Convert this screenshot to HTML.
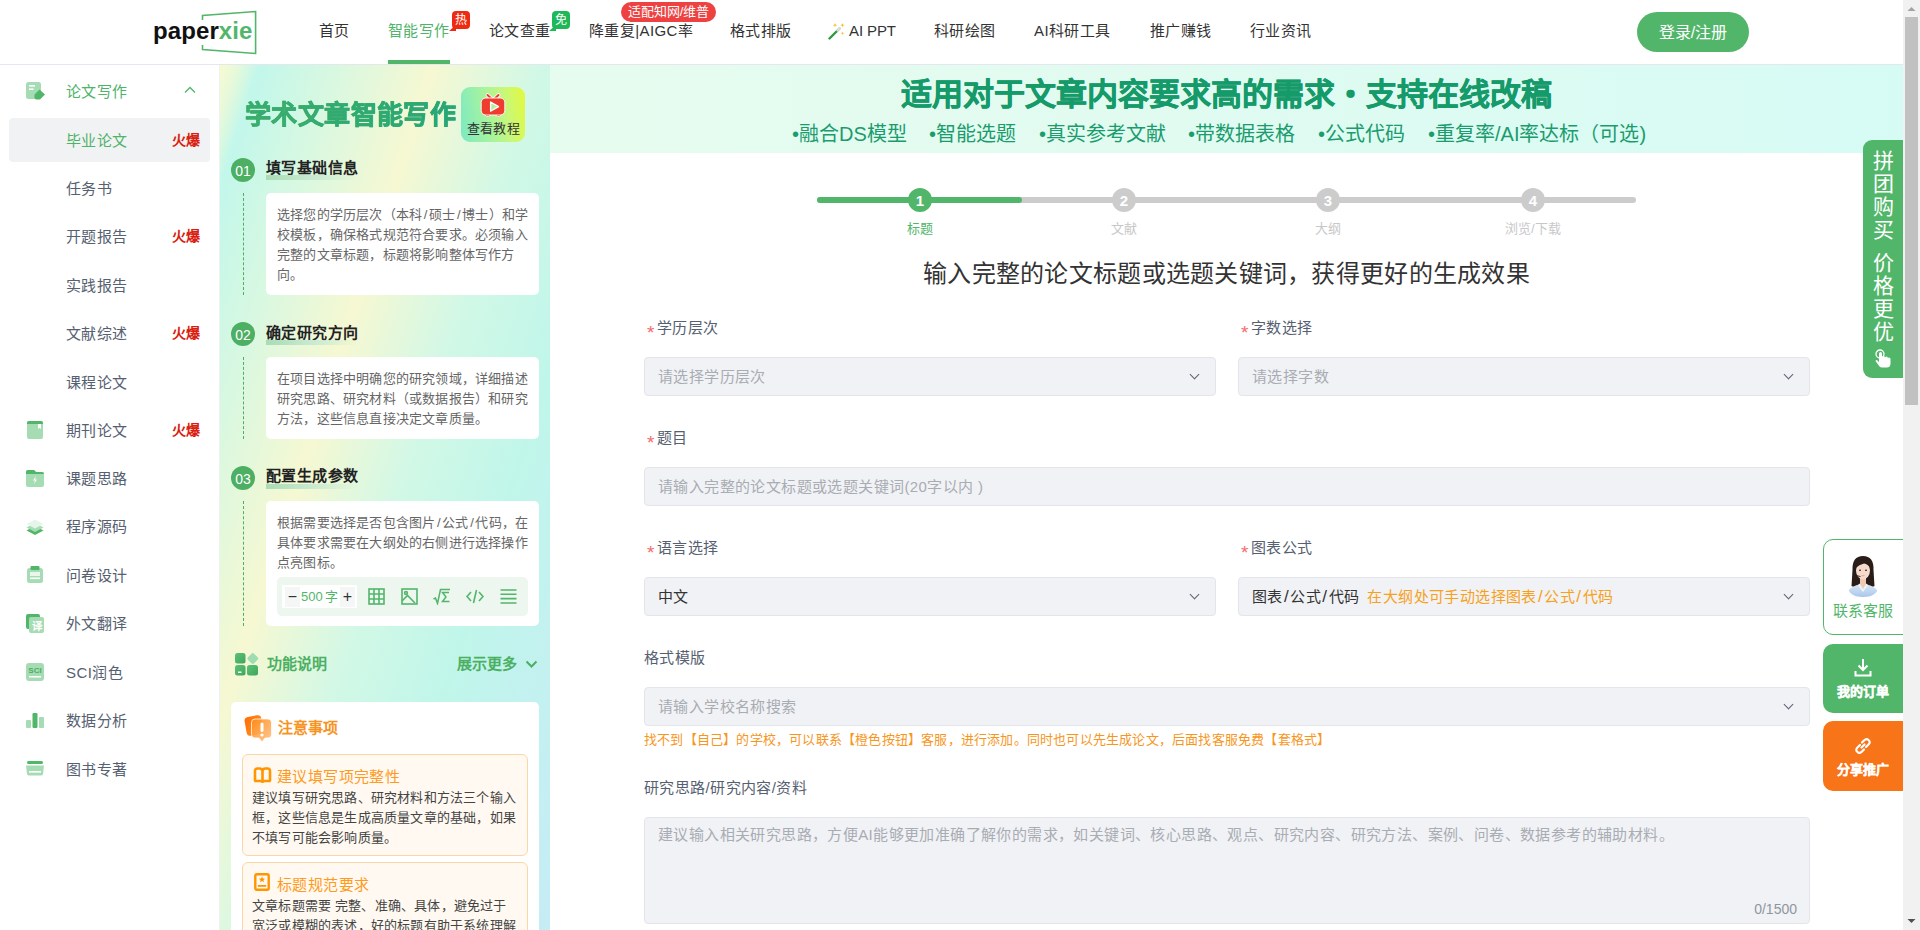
<!DOCTYPE html>
<html lang="zh-CN">
<head>
<meta charset="utf-8">
<title>paperxie</title>
<style>
*{box-sizing:border-box;margin:0;padding:0}
html,body{width:1920px;height:930px;overflow:hidden;background:#fff}
body{position:relative;font-family:"Liberation Sans",sans-serif;color:#333;font-size:14px}
.abs{position:absolute}
.nw{white-space:nowrap}
/* header */
#hdr{position:absolute;left:0;top:0;width:1903px;height:65px;background:#fff;border-bottom:1px solid #e6e6ee}
.nav{position:absolute;top:21px;height:20px;line-height:20px;font-size:15px;letter-spacing:0.4px;color:#333;white-space:nowrap}
.nav.act{color:#4fb36a}
.badge{position:absolute;top:11px;width:18px;height:18px;border-radius:4px;color:#fff;font-size:12px;line-height:18px;text-align:center}
.badge:after{content:"";position:absolute;left:-3px;bottom:-2px;width:0;height:0;border-top:6px solid transparent;border-right:7px solid currentColor}
/* sidebar */
#side{position:absolute;left:0;top:65px;width:220px;height:865px;background:#fff;border-right:1px solid #edf3f1}
.si{position:absolute;left:66px;height:20px;line-height:20px;font-size:15px;letter-spacing:0.4px;color:#566070;white-space:nowrap}
.hot{position:absolute;left:172px;height:20px;line-height:20px;font-size:14px;font-weight:bold;color:#d9200e;white-space:nowrap}
.sic{position:absolute;left:26px}
/* panel */
#panel{position:absolute;left:220px;top:65px;width:330px;height:865px;overflow:hidden;
background:linear-gradient(108deg,#f8fad2 0%,#e6f9da 3%,#c2f7eb 6.5%,#daf8e0 20%,#f6f8d2 35%,#d2f8e6 52%,#c0f6ea 70%,#c6ecf6 100%)}

.ptitle{font-size:26px;letter-spacing:0.4px;line-height:32px;font-weight:bold;-webkit-text-stroke:0.5px rgba(50,170,110,0.85);background:linear-gradient(90deg,#52b86a 0%,#2fae78 50%,#12a088 100%);-webkit-background-clip:text;background-clip:text;color:transparent}
.stepc{position:absolute;left:231px;width:24px;height:24px;border-radius:50%;background:#4caf63;color:#fff;font-size:14px;line-height:26px;text-align:center}
.stept{position:absolute;left:266px;height:20px;line-height:20px;font-size:15px;letter-spacing:0.4px;font-weight:bold;color:#222;white-space:nowrap}
.stepu{position:absolute;left:266px;width:92px;height:5px;background:linear-gradient(90deg,#a9dcb4 0%,#c8ead0 50%,rgba(200,234,208,0) 100%)}
.dash{position:absolute;left:243px;width:0;border-left:1px dashed #4caf63}
.card{position:absolute;left:266px;width:273px;border-radius:5px;background:#fff}
.ctext{position:absolute;left:11px;top:12px;font-size:13px;letter-spacing:0.2px;line-height:20px;color:#666;white-space:nowrap}
.obox{position:absolute;left:242px;width:286px;border:1px solid #fcd7a6;border-radius:6px;background:#fff9f1}
.otitle{position:absolute;left:34px;top:12px;font-size:15px;letter-spacing:0.4px;line-height:20px;color:#ff9a1e;white-space:nowrap}
.otext{position:absolute;left:9px;top:33px;font-size:13px;letter-spacing:0.2px;line-height:20px;color:#444;white-space:nowrap}
/* main */
#banner{position:absolute;left:550px;top:65px;width:1353px;height:88px;background:linear-gradient(90deg,#e6fcef 0%,#e2fbf0 40%,#d6fbf5 100%)}

.bl{position:absolute;top:0;left:0;white-space:nowrap}
.stc{position:absolute;top:188px;width:24px;height:24px;border-radius:50%;background:#cccccc;color:#fff;font-size:15px;font-weight:bold;line-height:25px;text-align:center}
.stl{position:absolute;top:219px;width:100px;text-align:center;font-size:13px;letter-spacing:0.2px;line-height:20px;color:#c8c8c8;white-space:nowrap}
.lbl{position:absolute;height:20px;line-height:20px;font-size:15px;letter-spacing:0.4px;color:#566070;white-space:nowrap}
.lbl.req{padding-left:10px}
.lbl.req:before{content:"*";position:absolute;left:0;top:5px;color:#f56c6c;font-size:19px;line-height:20px;letter-spacing:0}
.inp{position:absolute;height:39px;border:1px solid #e3e5ea;border-radius:4px;background:#f1f2f5}
.ph{position:absolute;left:13px;top:9px;font-size:15px;letter-spacing:0.4px;line-height:20px;color:#a8acb3;white-space:nowrap}
.val{position:absolute;left:13px;top:9px;font-size:15px;letter-spacing:0.4px;line-height:20px;color:#333;white-space:nowrap}
.sl{font-style:normal;margin:0 1.2px;font-size:17px}.sl2{font-style:normal;margin:0 1.5px}
.chev{position:absolute;right:17px;top:13px;width:7px;height:7px;border-right:1.5px solid #5b6270;border-bottom:1.5px solid #5b6270;transform:rotate(45deg)}
/* scrollbar */
#sb{position:absolute;left:1903px;top:0;width:17px;height:930px;background:#f1f1f1}
#sbthumb{position:absolute;left:2px;top:17px;width:13px;height:388px;background:#c1c1c1}
</style>
</head>
<body>
<div id="hdr">
  <!-- logo -->
  <svg class="abs" style="left:150px;top:8px" width="110" height="50" viewBox="0 0 110 50">
    <path d="M52.5 12 V7.5 L105.6 3.5 V45.5 L52.5 41.5 V37" fill="none" stroke="#52b66a" stroke-width="1.6"/>
  </svg>
  <div class="abs nw" style="left:153px;top:16px;font-size:24px;font-weight:bold;letter-spacing:0.1px;line-height:30px;color:#111">paper<span style="color:#52b66a">xie</span></div>

  <div class="nav" style="left:319px">首页</div>
  <div class="nav act" style="left:388px">智能写作</div>
  <div class="abs" style="left:388px;top:60px;width:62px;height:4px;background:#52b66a"></div>
  <div class="badge" style="left:452px;background:#ef2a12;color:#ef2a12"><span style="color:#fff;position:relative">热</span></div>
  <div class="nav" style="left:489px">论文查重</div>
  <div class="badge" style="left:552px;background:#1fb859;color:#1fb859"><span style="color:#fff;position:relative">免</span></div>
  <div class="nav" style="left:589px">降重复|AIGC率</div>
  <div class="abs nw" style="left:621px;top:2px;width:95px;height:20px;border-radius:10px;background:#ee4242;color:#fff;font-size:13px;line-height:20px;text-align:center">适配知网/维普</div>
  <div class="nav" style="left:730px">格式排版</div>
  <svg class="abs" style="left:828px;top:22px" width="18" height="18" viewBox="0 0 18 18">
    <path d="M1.5 16.5 L11.5 6.5" stroke="#2e9a3a" stroke-width="2.4" stroke-linecap="round"/>
    <path d="M9.5 8.5 L12 6" stroke="#ddd" stroke-width="2.4" stroke-linecap="round"/>
    <path d="M7 1 l.6 1.6 1.6.6-1.6.6L7 5.4l-.6-1.6-1.6-.6 1.6-.6z" fill="#f6c22c"/>
    <path d="M14.5 1l.6 1.6 1.6.6-1.6.6-.6 1.6-.6-1.6-1.6-.6 1.6-.6z" fill="#f6c22c"/>
    <path d="M14.5 9.5l.5 1.3 1.3.5-1.3.5-.5 1.3-.5-1.3-1.3-.5 1.3-.5z" fill="#f6c22c"/>
  </svg>
  <div class="nav" style="left:849px;letter-spacing:-0.1px">AI PPT</div>
  <div class="nav" style="left:934px">科研绘图</div>
  <div class="nav" style="left:1034px">AI科研工具</div>
  <div class="nav" style="left:1150px">推广赚钱</div>
  <div class="nav" style="left:1250px">行业资讯</div>

  <div class="abs nw" style="left:1637px;top:12px;width:112px;height:40px;border-radius:20px;background:#52b66a;color:#fff;font-size:16px;line-height:42px;text-align:center">登录/注册</div>
</div>

<div id="side">
  <div class="abs" style="left:9px;top:53px;width:201px;height:44px;border-radius:4px;background:#f1f2f4"></div>
</div>
<div class="si" style="top:82px;color:#4fb36a">论文写作</div>
<div class="si" style="top:131px;color:#4fb36a">毕业论文</div>
<div class="hot" style="top:130px">火爆</div>
<div class="si" style="top:179px;color:#566070">任务书</div>
<div class="si" style="top:227px;color:#566070">开题报告</div>
<div class="hot" style="top:226px">火爆</div>
<div class="si" style="top:276px;color:#566070">实践报告</div>
<div class="si" style="top:324px;color:#566070">文献综述</div>
<div class="hot" style="top:323px">火爆</div>
<div class="si" style="top:373px;color:#566070">课程论文</div>
<div class="si" style="top:421px;color:#566070">期刊论文</div>
<div class="hot" style="top:420px">火爆</div>
<div class="si" style="top:469px;color:#566070">课题思路</div>
<div class="si" style="top:517px;color:#566070">程序源码</div>
<div class="si" style="top:566px;color:#566070">问卷设计</div>
<div class="si" style="top:614px;color:#566070">外文翻译</div>
<div class="si" style="top:663px;color:#566070">SCI润色</div>
<div class="si" style="top:711px;color:#566070">数据分析</div>
<div class="si" style="top:760px;color:#566070">图书专著</div>

<svg class="sic" style="top:82px" width="20" height="18" viewBox="0 0 20 18"><rect x="0" y="0" width="15" height="17" rx="2.5" fill="#a6dcb3"/><rect x="3" y="3" width="6" height="1.6" fill="#fff"/><rect x="3" y="6.4" width="4.5" height="1.6" fill="#fff"/><path d="M8.5 12.5 L13.5 7.5 L19 12.5 L14 17.5 H10.5 Q8.5 17.5 8.5 15.5Z" fill="#52b66a"/></svg>
<svg class="abs" style="left:184px;top:86px" width="12" height="8" viewBox="0 0 12 8"><path d="M1 6.5 L6 1.5 L11 6.5" fill="none" stroke="#52b66a" stroke-width="1.3"/></svg>
<svg class="sic" style="left:27px;top:421px" width="17" height="18" viewBox="0 0 17 18"><rect x="0" y="0" width="16" height="18" rx="2" fill="#a6dcb3"/><path d="M0 2 Q0 0 2 0 H14 Q16 0 16 2 V3 H0Z" fill="#52b66a"/><path d="M11 3 V8 L12.5 6.8 L14 8 V3Z" fill="#fff"/></svg>
<svg class="sic" style="top:470px" width="19" height="18" viewBox="0 0 19 18"><path d="M0 2 Q0 0 2 0 H8 L10 2 H16 Q18 2 18 4 V15 Q18 17 16 17 H2 Q0 17 0 15Z" fill="#a6dcb3"/><path d="M0 2 Q0 0 2 0 H8 L10 2 H16 Q18 2 18 4 V4 H0Z" fill="#52b66a"/><path d="M10 6 L7 10.5 H9 L8 14 L11 9.5 H9Z" fill="#fff"/></svg>
<svg class="sic" style="left:26px;top:519px" width="18" height="17" viewBox="0 0 18 17"><path d="M9 7 L17.5 11.5 L9 16 L0.5 11.5Z" fill="#52b66a"/><path d="M9 4 L17.5 8.5 L9 13 L0.5 8.5Z" fill="#a6dcb3"/><path d="M9 0.5 L17.5 5 L9 9.5 L0.5 5Z" fill="#e6f5ea"/></svg>
<svg class="sic" style="left:27px;top:566px" width="16" height="17" viewBox="0 0 16 17"><rect x="0" y="2" width="16" height="15" rx="2.5" fill="#a6dcb3"/><rect x="3.5" y="0" width="9" height="4" rx="1" fill="#52b66a"/><rect x="3" y="6" width="10" height="4" fill="#e8f6ec"/><rect x="3" y="11.5" width="10" height="1.6" fill="#fff"/></svg>
<svg class="sic" style="left:26px;top:614px" width="19" height="20" viewBox="0 0 19 20"><rect x="0" y="0" width="14" height="15" rx="2" fill="#52b66a"/><rect x="3" y="3" width="15" height="16" rx="2" fill="#a6dcb3"/><text x="10.5" y="15.5" font-size="10.5" font-weight="bold" text-anchor="middle" fill="#fff" font-family="Liberation Sans">译</text></svg>
<svg class="sic" style="left:26px;top:663px" width="18" height="18" viewBox="0 0 18 18"><rect x="0" y="0" width="18" height="18" rx="3" fill="#a6dcb3"/><text x="9" y="10" font-size="8" font-weight="bold" text-anchor="middle" fill="#4fae62" font-family="Liberation Sans">SCI</text><rect x="3" y="13" width="12" height="1.5" fill="#fff"/></svg>
<svg class="sic" style="left:26px;top:713px" width="18" height="16" viewBox="0 0 18 16"><rect x="0" y="7" width="5" height="8" rx="1" fill="#a6dcb3"/><rect x="6.5" y="0" width="5" height="15" rx="1.2" fill="#52b66a"/><rect x="13" y="4" width="5" height="11" rx="1" fill="#a6dcb3"/></svg>
<svg class="sic" style="left:26px;top:761px" width="18" height="15" viewBox="0 0 18 15"><rect x="1" y="0" width="16" height="3" rx="1.5" fill="#52b66a"/><path d="M0 4.5 H18 L17 13 Q16.7 14.5 15 14.5 H3 Q1.3 14.5 1 13Z" fill="#a6dcb3"/><rect x="3" y="10" width="12" height="1.6" fill="#fff"/></svg>

<div id="panel"></div>
<!-- panel content -->
<div class="abs nw ptitle" style="left:245px;top:99px">学术文章智能写作</div>
<div class="abs" style="left:461px;top:87px;width:64px;height:55px;border-radius:9px;background:linear-gradient(80deg,#7ce9c4 0%,#a9f49a 45%,#c8f77a 70%,#e4f93a 100%)"></div>
<svg class="abs" style="left:479px;top:93px" width="28" height="25" viewBox="0 0 28 25">
  <path d="M8.5 2 L12.5 5.8 M19.5 2 L15.5 5.8" stroke="#fff" stroke-width="3.6" stroke-linecap="round"/>
  <path d="M8.5 2 L12.5 5.8 M19.5 2 L15.5 5.8" stroke="#f03c2e" stroke-width="2" stroke-linecap="round"/>
  <rect x="6.5" y="20" width="4" height="3.5" rx="1" fill="#f03c2e" stroke="#fff" stroke-width="0.8"/>
  <rect x="17.5" y="20" width="4" height="3.5" rx="1" fill="#f03c2e" stroke="#fff" stroke-width="0.8"/>
  <rect x="2.2" y="5" width="23.6" height="17" rx="4.5" fill="#f03c2e" stroke="#fff" stroke-width="0.9"/>
  <path d="M11.6 9 L19.6 13.6 L11.6 18.2Z" fill="#b6ef9c" stroke="#fff" stroke-width="1.3" stroke-linejoin="round"/>
</svg>
<div class="abs nw" style="left:467px;top:119px;font-size:13px;letter-spacing:0.2px;line-height:20px;color:#333">查看教程</div>

<div class="stepc" style="top:158px">01</div>
<div class="stept" style="top:158px">填写基础信息</div>
<div class="stepu" style="top:175px"></div>
<div class="dash" style="top:193px;height:102px"></div>
<div class="card" style="top:193px;height:102px"><div class="ctext">选择您的学历层次（本科<i class="sl2">/</i>硕士<i class="sl2">/</i>博士）和学<br>校模板，确保格式规范符合要求。必须输入<br>完整的文章标题，标题将影响整体写作方<br>向。</div></div>

<div class="stepc" style="top:322px">02</div>
<div class="stept" style="top:323px">确定研究方向</div>
<div class="stepu" style="top:340px"></div>
<div class="dash" style="top:357px;height:82px"></div>
<div class="card" style="top:357px;height:82px"><div class="ctext">在项目选择中明确您的研究领域，详细描述<br>研究思路、研究材料（或数据报告）和研究<br>方法，这些信息直接决定文章质量。</div></div>

<div class="stepc" style="top:466px">03</div>
<div class="stept" style="top:466px">配置生成参数</div>
<div class="stepu" style="top:484px"></div>
<div class="dash" style="top:501px;height:125px"></div>
<div class="card" style="top:501px;height:125px"><div class="ctext">根据需要选择是否包含图片<i class="sl2">/</i>公式<i class="sl2">/</i>代码，在<br>具体要求需要在大纲处的右侧进行选择操作<br>点亮图标。</div>
  <div class="abs" style="left:11px;top:76px;width:251px;height:39px;border-radius:5px;background:#eef6f0"></div>
  <div class="abs" style="left:16px;top:84px;width:75px;height:23px;background:#fff"></div>
  <div class="abs" style="left:19px;top:86px;width:15px;height:20px;background:#f5f7f6;color:#333;font-size:16px;line-height:19px;text-align:center">−</div>
  <div class="abs nw" style="left:35px;top:86px;font-size:13px;line-height:20px;color:#52b66a">500<span style="margin-left:2px">字</span></div>
  <div class="abs" style="left:74px;top:86px;width:15px;height:20px;background:#f5f7f6;color:#333;font-size:16px;line-height:19px;text-align:center">+</div>
  <svg class="abs" style="left:102px;top:87px" width="17" height="17" viewBox="0 0 17 17" fill="none" stroke="#52b66a" stroke-width="1.6"><rect x="1" y="1" width="15" height="15"/><path d="M1 6 H16 M1 11 H16 M6 1 V16 M11 1 V16"/></svg>
  <svg class="abs" style="left:135px;top:87px" width="17" height="17" viewBox="0 0 17 17" fill="none" stroke="#52b66a" stroke-width="1.6"><rect x="1" y="1" width="15" height="15"/><path d="M1 13 L6.5 7.5 L14 15"/><circle cx="5" cy="5" r="1.4"/></svg>
  <svg class="abs" style="left:167px;top:87px" width="18" height="17" viewBox="0 0 18 17" fill="none" stroke="#52b66a" stroke-width="1.5"><path d="M0.5 11 L2.5 10 L4.5 15.5 L7.5 1.5 H17"/><path d="M16 4.5 H9.5 L13 9 L9.5 13.5 H16.5"/></svg>
  <svg class="abs" style="left:200px;top:87px" width="18" height="17" viewBox="0 0 18 17" fill="none" stroke="#52b66a" stroke-width="1.6"><path d="M5 4 L1 8.5 L5 13 M13 4 L17 8.5 L13 13 M10.5 2 L7.5 15"/></svg>
  <svg class="abs" style="left:234px;top:87px" width="17" height="17" viewBox="0 0 17 17" fill="none" stroke="#52b66a" stroke-width="1.6"><path d="M0.5 2 H16.5 M0.5 6.3 H16.5 M0.5 10.6 H16.5 M0.5 15 H16.5"/></svg>
</div>

<svg class="abs" style="left:234px;top:651px" width="26" height="26" viewBox="0 0 26 26">
  <defs><linearGradient id="gg" x1="0" y1="0" x2="1" y2="1"><stop offset="0" stop-color="#5cc27a"/><stop offset="1" stop-color="#3ea658"/></linearGradient></defs>
  <rect x="1" y="2" width="10.5" height="10.5" rx="2.5" fill="url(#gg)"/>
  <rect x="14.5" y="3.2" width="8.6" height="8.6" rx="1.8" transform="rotate(45 18.8 7.5)" fill="#9fdcb2"/>
  <rect x="1" y="14" width="10.5" height="10.5" rx="2.5" fill="url(#gg)"/>
  <rect x="13" y="14" width="11" height="10.5" rx="2.5" fill="url(#gg)"/>
  <rect x="4" y="20.5" width="3.5" height="1.5" fill="#fff"/>
</svg>
<div class="abs nw" style="left:267px;top:654px;font-size:15px;line-height:20px;font-weight:bold;color:#4caf63">功能说明</div>
<div class="abs nw" style="left:457px;top:654px;font-size:15px;line-height:20px;font-weight:bold;color:#4caf63">展示更多</div>
<svg class="abs" style="left:525px;top:659px" width="13" height="11" viewBox="0 0 13 11"><path d="M1.5 2.5 L6.5 7.5 L11.5 2.5" fill="none" stroke="#4caf63" stroke-width="2"/></svg>

<div class="abs" style="left:231px;top:702px;width:308px;height:240px;border-radius:5px;background:#fff"></div>
<svg class="abs" style="left:243px;top:713px" width="31" height="31" viewBox="0 0 31 31">
  <defs><linearGradient id="og" x1="0" y1="0" x2="1" y2="1"><stop offset="0" stop-color="#ff6a00"/><stop offset="1" stop-color="#ff9d2e"/></linearGradient>
  <linearGradient id="og2" x1="0" y1="0" x2="1" y2="1"><stop offset="0" stop-color="#ff8c1a" stop-opacity="0.9"/><stop offset="1" stop-color="#ffc48a" stop-opacity="0.95"/></linearGradient></defs>
  <rect x="2.5" y="3" width="17" height="19" rx="4" transform="rotate(-10 11 12.5)" fill="url(#og)"/>
  <path d="M12 6 H25 Q28.5 6 28.5 9.5 V21.5 Q28.5 25 25 25 H22 L19 29 L16 25 H12 Q8.5 25 8.5 21.5 V9.5 Q8.5 6 12 6Z" fill="url(#og2)" stroke="rgba(255,255,255,0.85)" stroke-width="0.9"/>
  <rect x="17.5" y="9.5" width="3" height="9.5" rx="1.5" fill="#fff"/>
  <circle cx="19" cy="22" r="1.6" fill="#fff"/>
</svg>
<div class="abs nw" style="left:278px;top:718px;font-size:15px;line-height:20px;font-weight:bold;color:#f7931e">注意事项</div>

<div class="obox" style="top:754px;height:102px">
  <svg class="abs" style="left:10px;top:12px" width="19" height="16" viewBox="0 0 19 16"><path d="M2 14 V4 Q2 1.5 4.5 1.5 H6.5 Q9.5 1.5 9.5 4.5 V14 M9.5 4.5 Q9.5 1.5 12.5 1.5 H14.5 Q17 1.5 17 4 V14 M1.2 14 H7.5 Q9.5 14 9.5 15 Q9.5 14 11.5 14 H17.8" fill="none" stroke="#ff9500" stroke-width="2.6" stroke-linejoin="round"/></svg>
  <div class="otitle">建议填写项完整性</div>
  <div class="otext">建议填写研究思路、研究材料和方法三个输入<br>框，这些信息是生成高质量文章的基础，如果<br>不填写可能会影响质量。</div>
</div>
<div class="obox" style="top:862px;height:120px">
  <svg class="abs" style="left:11px;top:10px" width="16" height="18" viewBox="0 0 16 18"><rect x="1.3" y="1.3" width="13.4" height="15.4" rx="1.5" fill="none" stroke="#ff9500" stroke-width="2.4"/><path d="M8 3.6 l.95 2 2.15.2-1.65 1.4.55 2.1-2-1.2-2 1.2.55-2.1-1.65-1.4 2.15-.2z" fill="#ff9500"/><rect x="3.8" y="12" width="8.4" height="1.8" fill="#ff9500"/></svg>
  <div class="otitle">标题规范要求</div>
  <div class="otext">文章标题需要 完整、准确、具体，避免过于<br>宽泛或模糊的表述，好的标题有助于系统理解</div>
</div>

<div id="banner"></div>
<div class="abs nw" style="left:550px;top:75px;width:1353px;text-align:center;font-size:31px;line-height:40px;font-weight:bold;color:#159a6a;-webkit-text-stroke:0.5px #159a6a">适用对于文章内容要求高的需求・支持在线改稿</div>
<div class="abs nw" style="left:792px;top:121px;font-size:20px;line-height:26px;color:#1a9c6e">
<span class="bl">•融合DS模型</span><span class="bl" style="left:137px">•智能选题</span><span class="bl" style="left:247px">•真实参考文献</span><span class="bl" style="left:396px">•带数据表格</span><span class="bl" style="left:526px">•公式代码</span><span class="bl" style="left:636px">•重复率/AI率达标（可选)</span>
</div>

<!-- steps -->
<div class="abs" style="left:817px;top:197px;width:819px;height:6px;border-radius:3px;background:#cccccc"></div>
<div class="abs" style="left:817px;top:197px;width:205px;height:6px;border-radius:3px;background:#52b66a"></div>
<div class="stc" style="left:908px;background:#52b66a">1</div>
<div class="stc" style="left:1112px">2</div>
<div class="stc" style="left:1316px">3</div>
<div class="stc" style="left:1521px">4</div>
<div class="stl" style="left:870px;color:#52b66a">标题</div>
<div class="stl" style="left:1074px">文献</div>
<div class="stl" style="left:1278px">大纲</div>
<div class="stl" style="left:1483px">浏览/下载</div>

<div class="abs nw" style="left:550px;top:259px;width:1353px;text-align:center;font-size:24px;letter-spacing:0.27px;line-height:30px;color:#333">输入完整的论文标题或选题关键词，获得更好的生成效果</div>

<!-- form -->
<div class="lbl req" style="left:647px;top:318px">学历层次</div>
<div class="lbl req" style="left:1241px;top:318px">字数选择</div>
<div class="inp" style="left:644px;top:357px;width:572px"><span class="ph">请选择学历层次</span><i class="chev"></i></div>
<div class="inp" style="left:1238px;top:357px;width:572px"><span class="ph">请选择字数</span><i class="chev"></i></div>

<div class="lbl req" style="left:647px;top:428px">题目</div>
<div class="inp" style="left:644px;top:467px;width:1166px"><span class="ph">请输入完整的论文标题或选题关键词(20字以内 )</span></div>

<div class="lbl req" style="left:647px;top:538px">语言选择</div>
<div class="lbl req" style="left:1241px;top:538px">图表公式</div>
<div class="inp" style="left:644px;top:577px;width:572px"><span class="val">中文</span><i class="chev"></i></div>
<div class="inp" style="left:1238px;top:577px;width:572px"><span class="val">图表<i class="sl">/</i>公式<i class="sl">/</i>代码<span style="color:#f7a11b;margin-left:8px">在大纲处可手动选择图表<i class="sl">/</i>公式<i class="sl">/</i>代码</span></span><i class="chev"></i></div>

<div class="lbl" style="left:644px;top:648px">格式模版</div>
<div class="inp" style="left:644px;top:687px;width:1166px"><span class="ph">请输入学校名称搜索</span><i class="chev"></i></div>
<div class="abs nw" style="left:644px;top:730px;font-size:13px;letter-spacing:0.2px;line-height:20px;color:#f7961c">找不到【自己】的学校，可以联系【橙色按钮】客服，进行添加。同时也可以先生成论文，后面找客服免费【套格式】</div>

<div class="lbl" style="left:644px;top:778px">研究思路/研究内容/资料</div>
<div class="inp" style="left:644px;top:817px;width:1166px;height:107px"><span class="ph" style="top:7px">建议输入相关研究思路，方便AI能够更加准确了解你的需求，如关键词、核心思路、观点、研究内容、研究方法、案例、问卷、数据参考的辅助材料。</span>
<span class="abs nw" style="right:12px;top:81px;font-size:14px;line-height:20px;color:#8f969f">0/1500</span></div>

<!-- right float -->
<div class="abs" style="left:1863px;top:140px;width:40px;height:238px;border-radius:9px 0 0 9px;background:#52b66a"></div>
<div class="abs" style="left:1871px;top:149px;width:24px;font-size:21px;line-height:23px;color:#fff;text-align:center">拼<br>团<br>购<br>买</div>
<div class="abs" style="left:1871px;top:251px;width:24px;font-size:21px;line-height:23px;color:#fff;text-align:center">价<br>格<br>更<br>优</div>
<svg class="abs" style="left:1874px;top:349px" width="18" height="19" viewBox="0 0 18 19"><circle cx="6" cy="5" r="4" fill="none" stroke="#fff" stroke-width="1.3"/><path d="M5 4.5 V13 L3.5 11.5 Q2 10.5 1.5 12 L5.5 17.5 Q6.5 18.5 8 18.5 H13 Q16 18.5 16.5 15 V10 Q16.5 8.5 15 8.5 Q14 8.5 14 9.5 Q14 7.5 12.5 7.5 Q11.5 7.5 11 8.5 Q11 7 9.5 7 Q8.5 7 8 8 V4.5 Q8 3 6.5 3 Q5 3 5 4.5Z" fill="#fff"/></svg>

<div class="abs" style="left:1823px;top:539px;width:90px;height:96px;border:1.5px solid #52b66a;border-radius:10px;background:#fff"></div>
<svg class="abs" style="left:1847px;top:555px" width="32" height="42" viewBox="0 0 32 42">
  <defs><clipPath id="cc"><path d="M0 28 Q0 42 16 42 Q32 42 32 28 V0 H0Z"/></clipPath>
  <linearGradient id="shirt" x1="0" y1="0" x2="0" y2="1"><stop offset="0" stop-color="#d6e6f7"/><stop offset="1" stop-color="#a9c6ea"/></linearGradient></defs>
  <g clip-path="url(#cc)">
  <path d="M5.5 15 Q5 1 16 1 Q27 1 26.5 15 L27.5 31 Q22 34 16 33 Q10 34 4.5 31Z" fill="#2a1c17"/>
  <path d="M0 40 Q2 32 10 30 L16 31 L22 30 Q30 32 32 40 V42 H0Z" fill="url(#shirt)"/>
  <path d="M10.5 30 L16 37 L21.5 30 L19 28.5 H13Z" fill="#eef3f8"/>
  <path d="M13 23 H19 V29 L16 34 L13 29Z" fill="#efc9b5"/>
  <ellipse cx="16" cy="15.5" rx="7" ry="9" fill="#f6dbcd"/>
  <path d="M8.8 13 Q9.5 4.5 16.5 5 Q22.5 5 23.2 13 Q21 9 17 8.5 Q12 9.5 8.8 13Z" fill="#2a1c17"/>
  <ellipse cx="13" cy="15.2" rx="1.1" ry="0.7" fill="#3a2a25"/>
  <ellipse cx="19" cy="15.2" rx="1.1" ry="0.7" fill="#3a2a25"/>
  <path d="M14 20.3 Q16 22 18 20.3 Q16 21 14 20.3Z" fill="#e0606a"/>
  <rect x="6" y="13.5" width="3" height="5.5" rx="1.2" fill="#1e1e1e"/>
  <path d="M8 18.5 Q9 21.5 13.5 21.5" stroke="#1e1e1e" stroke-width="0.9" fill="none"/>
  </g>
</svg>
<div class="abs nw" style="left:1833px;top:601px;font-size:15px;line-height:20px;color:#52b66a">联系客服</div>

<div class="abs" style="left:1823px;top:644px;width:90px;height:69px;border-radius:10px;background:#52b66a"></div>
<svg class="abs" style="left:1854px;top:658px" width="18" height="19" viewBox="0 0 18 19" fill="none" stroke="#fff" stroke-width="2"><path d="M9 1 V12 M4.5 7.5 L9 12 L13.5 7.5 M1.5 13 V17.5 H16.5 V13"/></svg>
<div class="abs nw" style="left:1837px;top:682px;font-size:13px;line-height:20px;font-weight:bold;color:#fff;-webkit-text-stroke:0.3px #fff">我的订单</div>

<div class="abs" style="left:1823px;top:721px;width:90px;height:70px;border-radius:10px;background:#f77419"></div>
<svg class="abs" style="left:1853px;top:736px" width="20" height="20" viewBox="0 0 20 20" fill="none" stroke="#fff" stroke-width="2.2" stroke-linecap="round"><path d="M8.5 11.5 L11.5 8.5"/><path d="M7 9 L4.5 11.5 Q2 14 4.5 16 Q6.5 18 9 15.5 L11 13.5"/><path d="M13 11 L15.5 8.5 Q18 6 15.5 4 Q13.5 2 11 4.5 L9 6.5"/></svg>
<div class="abs nw" style="left:1837px;top:760px;font-size:13px;line-height:20px;font-weight:bold;color:#fff;-webkit-text-stroke:0.3px #fff">分享推广</div>


<div id="sb"><div id="sbthumb"></div>
  <svg class="abs" style="left:4px;top:6px" width="9" height="6"><path d="M0.5 5 L4.5 1 L8.5 5Z" fill="#a3a3a3"/></svg>
  <svg class="abs" style="left:4px;top:918px" width="9" height="6"><path d="M0.5 1 L4.5 5 L8.5 1Z" fill="#505050"/></svg>
</div>
</body>
</html>
